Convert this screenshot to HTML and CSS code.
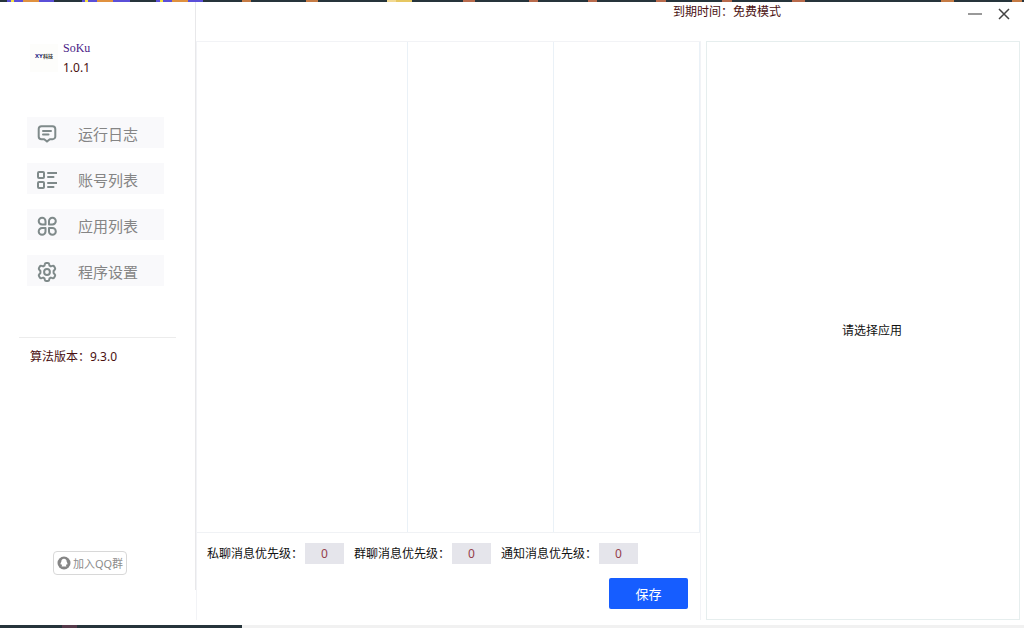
FILE: index.html
```html
<!DOCTYPE html>
<html lang="zh-CN">
<head>
    <meta charset="UTF-8">
    <meta name="viewport" content="width=device-width, initial-scale=1.0">
    <title>SoKu</title>
    <link rel="stylesheet" href="styles.css">
</head>
<body>
    <div class="desktop-top"></div>

    <div class="window">
        <aside class="sidebar">
            <div class="brand">
                <div class="brand-logo"><span class="logo-xy">XY</span>科技</div>
                <div class="brand-text">
                    <a class="brand-name" href="#">SoKu</a>
                    <span class="dark-red">1.0.1</span>
                </div>
            </div>

            <nav class="menu">
                <button class="menu-item" type="button">
                    <svg class="menu-icon" viewBox="0 0 20 20" aria-hidden="true">
                        <path d="M4.500 2.200h11a2.800 2.800 0 0 1 2.800 2.800v7.400a2.800 2.800 0 0 1-2.800 2.800h-2.700L10 17.600l-2.800-2.400H4.500a2.800 2.800 0 0 1-2.800-2.800V5a2.800 2.800 0 0 1 2.800-2.800z"/>
                        <path d="M6 7h8M6 10.500h5.500"/>
                    </svg>
                    运行日志
                </button>
                <button class="menu-item" type="button">
                    <svg class="menu-icon" viewBox="0 0 20 20" aria-hidden="true">
                        <rect x="1" y="2" width="6" height="6" rx="1"/>
                        <rect x="1" y="12" width="6" height="6" rx="1"/>
                        <path d="M11 3h8.500M11 7h5.500M11 13h8.500M11 17h5.500"/>
                    </svg>
                    账号列表
                </button>
                <button class="menu-item" type="button">
                    <svg class="menu-icon" viewBox="0 0 20 20" aria-hidden="true">
                        <path d="M8.500 8.500H5.100a3.400 3.400 0 1 1 3.400-3.400z"/>
                        <path d="M12 8.500V5.100a3.400 3.400 0 1 1 3.400 3.400z"/>
                        <path d="M8.500 12H5.100a3.400 3.400 0 1 0 3.400 3.400z"/>
                        <path d="M12 12v3.400a3.400 3.400 0 1 0 3.400-3.400z"/>
                    </svg>
                    应用列表
                </button>
                <button class="menu-item" type="button">
                    <svg class="menu-icon" viewBox="0 0 20 20" aria-hidden="true">
                        <path d="M7.800 2.200Q8 1 9.200 1h1.600q1.200 0 1.400 1.200l.3 1.400 1.400.8 1.500-.5q1.200-.4 1.800.7l.8 1.400q.6 1-.3 1.800L16.600 9v2l1.100 1.200q.9.800.3 1.800l-.8 1.400q-.6 1.100-1.800.7l-1.500-.5-1.400.8-.3 1.400Q12 19 10.800 19H9.200Q8 19 7.800 17.800l-.3-1.400-1.400-.8-1.500.5q-1.200.4-1.800-.7L2 14q-.6-1 .3-1.800L3.400 11V9L2.300 7.800Q1.400 7 2 6l.8-1.400q.6-1.100 1.800-.7l1.500.5 1.400-.8z"/>
                        <circle cx="10" cy="10" r="2.900"/>
                    </svg>
                    程序设置
                </button>
            </nav>

            <p class="version dark-red">算法版本：9.3.0</p>

            <button class="qq-btn" type="button">
                <svg class="qq-icon" viewBox="0 0 14 14" aria-hidden="true">
                    <circle cx="7" cy="7" r="6.500" fill="#858585"/>
                    <path d="M7 2.700c-1.900 0-2.700 1.400-2.700 3-.6.900-1 2-.8 2.800l.8-.5c.1.700.4 1.200.8 1.700l-.7.900h5.200l-.7-.9c.4-.5.700-1 .8-1.700l.8.500c.2-.8-.2-1.900-.8-2.800 0-1.600-.8-3-2.700-3z" fill="#fff"/>
                </svg>
                加入QQ群
            </button>
        </aside>

        <main class="content">
            <header class="titlebar">
                <span class="expire dark-red">到期时间：免费模式</span>
                <button class="win-btn" type="button" aria-label="最小化">
                    <svg viewBox="0 0 14 14"><path d="M0 7h14" stroke="#777"/></svg>
                </button>
                <button class="win-btn" type="button" aria-label="关闭">
                    <svg viewBox="0 0 14 14"><path d="M2 2l10 10M12 2L2 12"/></svg>
                </button>
            </header>

            <div class="panels">
                <section class="accounts">
                    <table class="account-table">
                        <tbody>
                            <tr>
                                <td></td>
                                <td></td>
                                <td></td>
                            </tr>
                        </tbody>
                    </table>

                    <form class="priority">
                        <div class="fields">
                            <div class="field">
                                <label for="private-level">私聊消息优先级：</label>
                                <input type="text" id="private-level" value="0">
                            </div>
                            <div class="field">
                                <label for="group-level">群聊消息优先级：</label>
                                <input type="text" id="group-level" value="0">
                            </div>
                            <div class="field">
                                <label for="notice-level">通知消息优先级：</label>
                                <input type="text" id="notice-level" value="0">
                            </div>
                        </div>
                        <button class="save-btn" type="button">保存</button>
                    </form>
                </section>

                <section class="app-panel">请选择应用</section>
            </div>
        </main>
    </div>

    <div class="desktop-bottom"></div>
</body>
</html>
```
FILE: styles.css
```css
* {
    box-sizing: border-box;
}

body {
    margin: 0;
    height: 100vh;
    display: flex;
    flex-direction: column;
    overflow: hidden;
    background: #fff;
    color: #111;
    font: 12px/20px "Noto Sans", "Noto Sans CJK SC", sans-serif;
}

button, input {
    font-family: inherit;
    border: none;
    padding: 0;
}

button {
    cursor: pointer;
}

.dark-red {
    color: #4a1010;
}

/* slivers of the desktop behind the window */
.desktop-top {
    flex: none;
    height: 2px;
    background: linear-gradient(90deg,
        #26343b 7px, #5a4fd8 7px 11px, #f5e040 11px 14px, #5a4fd8 14px 23px, #e0913f 23px 39px, #5a4fd8 39px 54px,
        #26343b 54px 82px, #5a4fd8 82px 85px, #f5e040 85px 88px, #5a4fd8 88px 97px, #e0913f 97px 113px, #5a4fd8 113px 130px,
        #26343b 130px 156px, #5a4fd8 156px 160px, #f5e040 160px 163px, #5a4fd8 163px 172px, #e0913f 172px 188px, #5a4fd8 188px 203px,
        #26343b 203px 242px, #c57b45 242px 251px, #26343b 251px 306px, #c57b45 306px 318px,
        #26343b 318px 387px, #f2d992 387px 396px, #e6c761 396px 412px,
        #26343b 412px 463px, #b86a4c 463px 475px, #26343b 475px 529px, #b86a4c 529px 538px,
        #26343b 538px 588px, #b86a4c 588px 597px, #26343b 597px 656px, #b86a4c 656px 666px,
        #26343b 666px 722px, #b86a4c 722px 732px, #26343b 732px 792px, #b86a4c 792px 805px,
        #26343b 805px 941px, #c57b45 941px 954px, #26343b 954px 1012px, #c57b45 1012px 1022px, #26343b 1022px);
}

.desktop-bottom {
    flex: none;
    height: 3px;
    background: linear-gradient(90deg, #26343b 62px, #553a4a 62px 77px, #26343b 77px 242px, #f1f1f1 242px);
}

.window {
    flex: 1;
    min-height: 0;
    display: flex;
}

/* sidebar */
.sidebar {
    width: 196px;
    flex: none;
    margin-bottom: 35px;
    padding: 36px 0 15px;
    display: flex;
    flex-direction: column;
    border-right: 1px solid #e8e8ea;
}

.brand {
    display: flex;
    gap: 5px;
    padding-left: 30px;
    align-items: center;
}

.brand-logo {
    width: 28px;
    height: 28px;
    display: flex;
    align-items: center;
    justify-content: center;
    padding-bottom: 4px;
    background: #fdfdfb;
    color: #333;
    font-size: 5px;
    font-weight: bold;
    line-height: 8px;
}

.logo-xy {
    color: #2b2a86;
    font-size: 6px;
}

.brand-text {
    display: flex;
    flex-direction: column;
}

.brand-name {
    font-family: "Liberation Serif", serif;
    color: #4b1a86;
    text-decoration: none;
}

.menu {
    display: flex;
    flex-direction: column;
    gap: 15px;
    margin: 39px 31px 0 27px;
}

.menu-item {
    height: 31px;
    display: flex;
    align-items: center;
    gap: 21px;
    padding: 2px 0 0 10px;
    background: #f9f9fb;
    color: #858585;
    font-size: 15px;
    line-height: 20px;
}

.menu-icon {
    width: 20px;
    height: 20px;
    fill: none;
    stroke: #7f8a8a;
    stroke-width: 2;
    stroke-linejoin: round;
    stroke-linecap: round;
}

.version {
    margin: 51px 19px 0;
    padding: 9px 0 0 11px;
    border-top: 1px solid #ececec;
}

.qq-btn {
    width: 74px;
    height: 24px;
    margin: auto 0 0 53px;
    display: flex;
    align-items: center;
    justify-content: center;
    gap: 2px;
    background: #fff;
    border: 1px solid #d8d8d8;
    border-radius: 4px;
    color: #8c8c8c;
    font-size: 11px;
    white-space: nowrap;
}

.qq-icon {
    width: 14px;
    height: 14px;
    flex: none;
}

/* right part */
.content {
    flex: 1;
    min-width: 0;
    display: flex;
    flex-direction: column;
}

.titlebar {
    height: 39px;
    flex: none;
    display: flex;
    justify-content: flex-end;
    align-items: flex-start;
    gap: 9px;
    padding-right: 10px;
}

.expire {
    margin-right: 175px;
}

.win-btn {
    width: 20px;
    height: 24px;
    display: flex;
    align-items: center;
    justify-content: center;
    background: none;
}

.win-btn svg {
    width: 14px;
    height: 14px;
    fill: none;
    stroke: #444;
    stroke-width: 1.5;
}

.panels {
    flex: 1;
    min-height: 0;
    display: grid;
    grid-template-columns: 505fr 314fr;
    gap: 5px;
    padding: 0 4px 5px 0;
}

.accounts {
    display: flex;
    flex-direction: column;
    border: 1px solid #f2f3f6;
    border-bottom: none;
}

.account-table {
    flex: 1;
    display: grid;
    border-bottom: 1px solid #f0f2f5;
}

.account-table tbody {
    display: grid;
}

.account-table tr {
    display: grid;
    grid-template-columns: 42fr 29fr 29fr;
}

.account-table td {
    padding: 0;
    border-right: 1px solid #eaf1f7;
}

.priority {
    display: flex;
    flex-direction: column;
    gap: 14px;
    padding: 10px 12px 11px 10px;
}

.fields {
    display: flex;
    gap: 10px;
}

.field {
    display: flex;
    align-items: center;
    gap: 2px;
    white-space: nowrap;
}

.field input {
    width: 39px;
    height: 21px;
    background: #e5e5eb;
    color: #95404c;
    font-size: 12px;
    text-align: center;
}

.save-btn {
    align-self: flex-end;
    width: 79px;
    height: 31px;
    background: #165dff;
    border-radius: 2px;
    color: #fff;
    font-size: 13px;
}

.app-panel {
    display: flex;
    align-items: center;
    justify-content: center;
    padding-left: 18px;
    border: 1px solid #e6eeee;
}
```
